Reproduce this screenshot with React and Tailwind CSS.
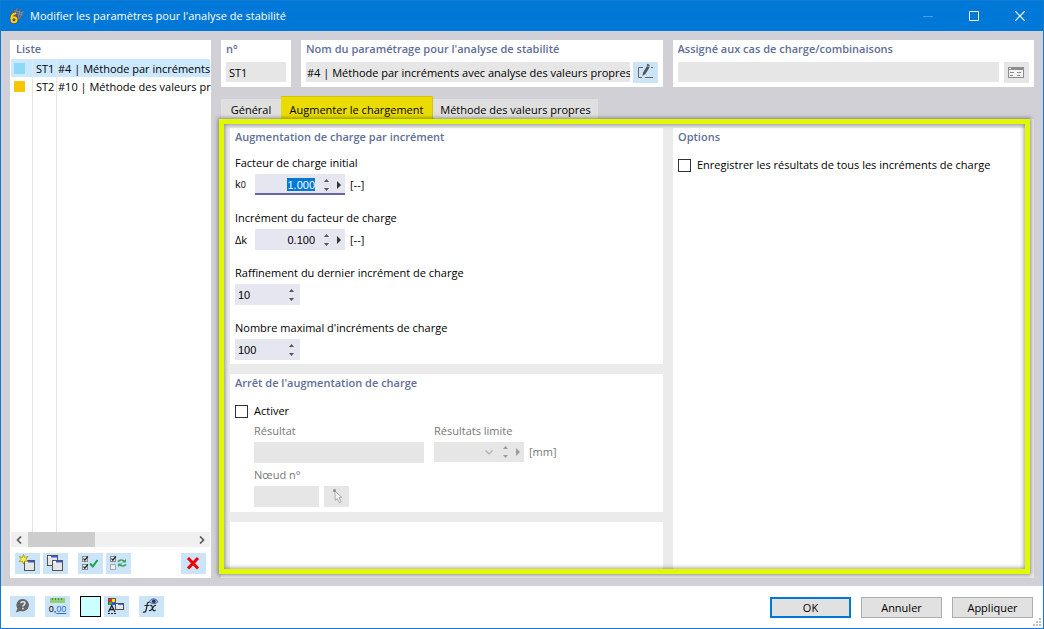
import { useState } from 'react';

const BLUE_BUTTON = 'flex h-[21px] w-[25px] shrink-0 items-center justify-center bg-[#cce4f7]';
const GREY_BUTTON = 'flex h-[21px] w-[25px] shrink-0 items-center justify-center bg-[#e6e6e6]';

const ENTRIES = [
	{ id: 'ST1', name: '#4 | Méthode par incréments', swatch: 'bg-[#8ed8f8]', row: 'bg-[#cce8ff]' },
	{ id: 'ST2', name: '#10 | Méthode des valeurs pr', swatch: 'bg-[#f7c600]', row: '' },
];

function AppLogo() {
	return (
		<svg width="16" height="16" viewBox="0 0 16 16" aria-hidden="true">
			<path d="M3 4 8 .5 15.500 2.500 14 10 10 12.500 6 8z" fill="#4a5f7c" />
			<path d="M4 4 14.500 7M6 2.500l9 2.500M9 .5 7 6M12 1.500 10 11M15 3l-3.500 8" stroke="#8cabc8" strokeWidth=".6" fill="none" />
			<path d="M8 5.200C5 5.500 3.300 8 3.300 11" stroke="#5b4a10" strokeWidth="3.200" fill="none" />
			<circle cx="6" cy="11.800" r="2.300" stroke="#5b4a10" strokeWidth="3.200" fill="none" />
			<path d="M8 5.200C5 5.500 3.300 8 3.300 11" stroke="#ffd02a" strokeWidth="2" fill="none" />
			<circle cx="6" cy="11.800" r="2.500" stroke="#ffd02a" strokeWidth="2" fill="none" />
		</svg>
	);
}

function MiniWindow({ x, y }) {
	return (
		<g transform={`translate(${x} ${y})`}>
			<rect x=".5" y=".5" width="10" height="10" fill="#e6e6e6" stroke="#555" />
			<rect x="1" y="1" width="9" height="2" fill="#f5f7ff" />
			<rect x="4" y="1" width="6" height="1" fill="#2f55f0" />
			<rect x="4" y="2" width="6" height="1" fill="#8ea2fa" />
		</g>
	);
}

function NewIcon() {
	return (
		<svg width="25" height="21" viewBox="0 0 25 21" aria-hidden="true">
			<MiniWindow x={9} y={7} />
			<path d="m8.500 1.500 1 3 3.300-1-2 2.700 2.200 2.300-3.300-.4L8.500 11 7.400 8.100l-3.300.4 2.200-2.300-2-2.700 3.200 1z" fill="#fff04a" stroke="#9a8c00" strokeWidth=".7" />
		</svg>
	);
}

function CopyIcon() {
	return (
		<svg width="25" height="21" viewBox="0 0 25 21" aria-hidden="true">
			<MiniWindow x={4} y={2} />
			<MiniWindow x={9} y={7} />
		</svg>
	);
}

function SmallBox({ y, checked }) {
	return (
		<g transform={`translate(4 ${y})`}>
			<rect x=".5" y=".5" width="5" height="5" fill="#e6f1fb" stroke={checked ? '#8a8a8a' : '#a8a8a8'} />
			{checked ? <path d="m1.500 2.500 1.300 1.700L5.800.5" fill="none" stroke="#222" strokeWidth="1.200" /> : null}
		</g>
	);
}

function CheckAllIcon() {
	return (
		<svg width="25" height="21" viewBox="0 0 25 21" aria-hidden="true">
			<SmallBox y={3} checked />
			<SmallBox y={11} checked />
			<path d="m12 10.500 2.800 3L19.500 7" fill="none" stroke="#10a64a" strokeWidth="2" />
		</svg>
	);
}

function ToggleIcon() {
	return (
		<svg width="25" height="21" viewBox="0 0 25 21" aria-hidden="true">
			<SmallBox y={3} checked />
			<SmallBox y={11} />
			<path d="M12 8.800c1-2 4-2.300 6-.8M20 11.200c-1 2-4 2.300-6 .8" fill="none" stroke="#3fa56c" strokeWidth="1.600" />
			<path d="M20 6v3.500h-4.500zM12 14v-3.500h4.500z" fill="#3fa56c" />
		</svg>
	);
}

function DeleteIcon() {
	return (
		<svg width="25" height="21" viewBox="0 0 25 21" aria-hidden="true">
			<path d="m7 5 10 10.500M17 5 7 15.500" stroke="#f00000" strokeWidth="3" />
		</svg>
	);
}

function EditIcon() {
	return (
		<svg width="25" height="21" viewBox="0 0 25 21" aria-hidden="true">
			<path d="M10 5.500H5.500v10H9M12 15.500h8M18 5.500h2" fill="none" stroke="#666" />
			<path d="m9.500 13.800.6-3.300L14 4l2.500 1.500-4.200 6.700z" fill="#555" />
			<path d="m14 2.500 2.500 1.500" stroke="#555" strokeWidth="1.500" />
		</svg>
	);
}

function CasesIcon() {
	return (
		<svg width="25" height="21" viewBox="0 0 25 21" aria-hidden="true">
			<rect x="4.500" y="5.500" width="15" height="10" fill="#f4f4f4" stroke="#8d8d8d" />
			<path d="M4 6.500h16" stroke="#8d8d8d" strokeWidth="3" />
			<path d="M5 6.500h2" stroke="#fff" />
			<path d="M6 10.500h4M13 10.500h4M6 13.500h3M13 13.500h3" stroke="#8d8d8d" />
		</svg>
	);
}

function PickIcon() {
	return (
		<svg width="25" height="21" viewBox="0 0 25 21" aria-hidden="true">
			<path d="m11 5 .2 9.500 2.100-2 2 4.300 1.700-.8-2-4.300 3-.1z" fill="#f7f7f7" stroke="#9b9b9b" strokeWidth=".8" />
			<circle cx="10.500" cy="4.500" r="1.500" fill="#8a8a8a" />
		</svg>
	);
}

function HelpIcon() {
	return (
		<svg width="25" height="21" viewBox="0 0 25 21" aria-hidden="true">
			<path d="M12.800 3a6.200 6.200 0 1 1-2.300 12L5.800 16.500l1.600-4A6.200 6.200 0 0 1 12.800 3z" fill="#666" />
			<path d="M10.800 7.200c.2-2 4.200-2 4.200.1 0 1.500-2 1.600-2 3.200" fill="none" stroke="#d8eafa" strokeWidth="1.500" />
			<path d="M12.200 11.700h1.600v1.600h-1.600z" fill="#d8eafa" />
		</svg>
	);
}

function DisplayIcon() {
	return (
		<svg width="25" height="21" viewBox="0 0 25 21" aria-hidden="true">
			<rect x="4" y="2" width="8" height="7" fill="#555" />
			<rect x="5" y="3" width="3" height="3" fill="#ff2a1e" />
			<rect x="8" y="3" width="3" height="3" fill="#ffe600" />
			<rect x="5" y="6" width="3" height="3" fill="#2fae3a" />
			<rect x="8" y="6" width="3" height="3" fill="#2857ff" />
			<path d="m4.500 16 3.200-6.500 3.300 6.500M5.500 13.500h4.500" fill="none" stroke="#222" strokeWidth="1.300" />
			<path d="M4 17.500h8" stroke="#222" strokeDasharray="2 1" />
			<rect x="11.500" y="7.500" width="8" height="6" fill="#e6e6e6" stroke="#4d4d4d" />
			<path d="M12 8.500h2" stroke="#fff" />
			<path d="M14 8.500h5" stroke="#4468f5" />
		</svg>
	);
}

function FormulaIcon() {
	return (
		<svg width="25" height="21" viewBox="0 0 25 21" aria-hidden="true">
			<path d="M10.500 6.500C8.500 5.500 8.200 8 7.800 10.500c-.5 4-1 6.500-3.800 5.500M5.500 9.500h5" fill="none" stroke="#222" strokeWidth="1.200" />
			<path d="M11 9.500c2-1 2 1 2.500 3s1 3 3 1.500M17 9.500c-2-.5-3 2-4 3.500s-1.500 2-3 1.500" fill="none" stroke="#222" strokeWidth="1.200" />
			<path d="M10.500 5.500c2-3.500 6-3.500 8.500 0-2.500 3-6.500 3-8.500 0z" fill="#b4c3ea" stroke="#27376e" strokeWidth=".8" />
			<circle cx="14.800" cy="5.300" r="1.900" fill="#27376e" />
		</svg>
	);
}

function Spinner({ muted = false }) {
	return (
		<svg width="7" height="14" viewBox="0 0 7 14" className={muted ? 'shrink-0 text-[#9b9b9b]' : 'shrink-0 text-[#555]'} aria-hidden="true">
			<path d="M3.500 1 6 4H1zM3.500 13 1 10h5z" fill="currentColor" />
		</svg>
	);
}

function RightArrow({ muted = false }) {
	return (
		<svg width="4" height="8" viewBox="0 0 4 8" className={muted ? 'shrink-0 text-[#9b9b9b]' : 'shrink-0 text-[#333]'} aria-hidden="true">
			<path d="M0 0v8l4-4z" fill="currentColor" />
		</svg>
	);
}

function Title({ children }) {
	return <h2 className="truncate font-semibold text-[#5f6f96]">{children}</h2>;
}

function FactorField({ id, label, symbol, value, onChange, selected = false }) {
	return (
		<div>
			<label htmlFor={id} className="block">{label}</label>
			<div className="mt-[3px] flex h-[21px] items-center">
				<span className="w-5">{symbol}</span>
				<div className={`flex h-[21px] w-[90px] items-center justify-end border-b-2 bg-[#e6e6f1] pt-[2px] pr-1 ${selected ? 'border-[#6464b0]' : 'border-[#e6e6f1]'}`}>
					<input
						id={id}
						className={`mr-2 h-[13px] w-[28px] text-right font-['Liberation_Sans',sans-serif] outline-none ${selected ? 'bg-[#0078d7] text-white' : ''}`}
						value={value}
						onChange={(event) => onChange(event.target.value)}
					/>
					<Spinner />
					<span className="w-[7px]" />
					<RightArrow />
				</div>
				<span className="ml-[5px]">[--]</span>
			</div>
		</div>
	);
}

function CountField({ id, label, value, onChange }) {
	return (
		<div>
			<label htmlFor={id} className="block">{label}</label>
			<div className="mt-[3px] flex h-[21px] w-[65px] items-center bg-[#e6e6f1] pr-[5px] pl-[3px]">
				<input
					id={id}
					className="w-0 flex-1 font-['Liberation_Sans',sans-serif] outline-none"
					value={value}
					onChange={(event) => onChange(event.target.value)}
				/>
				<Spinner />
			</div>
		</div>
	);
}

function CheckBox({ label, checked, onChange }) {
	return (
		<label className="flex items-center gap-[6px]">
			<input
				type="checkbox"
				className="size-[13px] shrink-0 appearance-none border border-[#333] bg-white checked:bg-[#333]"
				checked={checked}
				onChange={(event) => onChange(event.target.checked)}
			/>
			{label}
		</label>
	);
}

export default function App() {
	const [values, setValues] = useState({ k0: '1.000', dk: '0.100', refine: '10', max: '100' });
	const [stop, setStop] = useState(false);
	const [saveAll, setSaveAll] = useState(false);
	const update = (key) => (value) => setValues((current) => ({ ...current, [key]: value }));

	return (
		<div className="flex h-screen flex-col border border-[#0f7bd3] bg-[#d1d0d6] font-['Open_Sans','Noto_Sans',sans-serif] text-[11px] leading-4 text-black">
			<header className="flex h-[30px] shrink-0 items-center bg-[#0078d7] pl-[7px] text-white">
				<AppLogo />
				<h1 className="ml-[6px] flex-1 truncate">Modifier les paramètres pour l'analyse de stabilité</h1>
				<button type="button" aria-label="Réduire" className="flex h-full w-[46px] items-center justify-center">
					<svg width="10" height="10" viewBox="0 0 10 10"><path d="M0 5.500h10" stroke="#4a9fe3" /></svg>
				</button>
				<button type="button" aria-label="Agrandir" className="flex h-full w-[46px] items-center justify-center">
					<svg width="10" height="10" viewBox="0 0 10 10"><path d="M.5.5h9v9h-9z" fill="none" stroke="#fff" /></svg>
				</button>
				<button type="button" aria-label="Fermer" className="flex h-full w-[46px] items-center justify-center">
					<svg width="10" height="10" viewBox="0 0 10 10"><path d="m0 0 10 10M10 0 0 10" stroke="#fff" strokeWidth="1.200" /></svg>
				</button>
			</header>

			<div className="flex min-h-0 flex-1 gap-[10px] px-[9px] pt-[9px] pb-2">
				<aside className="flex w-[201px] shrink-0 flex-col bg-white px-px pt-px">
					<div className="px-[5px]"><Title>Liste</Title></div>
					<div className="mt-[2px] flex flex-1 flex-col">
						{ENTRIES.map((entry) => (
							<button key={entry.id} type="button" className={`flex h-[18px] items-center text-left ${entry.row}`}>
								<span className="flex h-full w-[22px] shrink-0 items-center border-r border-[#e5e5e5] pl-[3px]">
									<span className={`size-[11px] ${entry.swatch}`} />
								</span>
								<span className="h-full w-6 shrink-0 border-r border-[#e5e5e5] pt-[2px] pl-[3px]">{entry.id}</span>
								<span className="h-full flex-1 pt-[2px] pl-px whitespace-nowrap">{entry.name}</span>
							</button>
						))}
						<div className="flex flex-1">
							<div className="w-[22px] border-r border-[#e5e5e5]" />
							<div className="w-6 border-r border-[#e5e5e5]" />
						</div>
					</div>
					<div className="flex h-[15px] bg-[#f0f0f0]">
						<button type="button" aria-label="Défiler à gauche" className="flex w-[17px] items-center justify-center">
							<svg width="7" height="8" viewBox="0 0 7 8"><path d="M5 .5 1.500 4 5 7.500" fill="none" stroke="#555" strokeWidth="1.600" /></svg>
						</button>
						<div className="w-[67px] bg-[#cdcdcd]" />
						<button type="button" aria-label="Défiler à droite" className="ml-auto flex w-[17px] items-center justify-center">
							<svg width="7" height="8" viewBox="0 0 7 8"><path d="M2 .5 5.500 4 2 7.500" fill="none" stroke="#555" strokeWidth="1.600" /></svg>
						</button>
					</div>
					<div className="flex px-1 pt-[6px] pb-[4px]">
						<button type="button" aria-label="Nouveau" className={BLUE_BUTTON}><NewIcon /></button>
						<button type="button" aria-label="Copier" className={`ml-[3px] ${BLUE_BUTTON}`}><CopyIcon /></button>
						<button type="button" aria-label="Tout sélectionner" className={`ml-[10px] ${BLUE_BUTTON}`}><CheckAllIcon /></button>
						<button type="button" aria-label="Inverser la sélection" className={`ml-[3px] ${BLUE_BUTTON}`}><ToggleIcon /></button>
						<button type="button" aria-label="Supprimer" className={`ml-auto ${BLUE_BUTTON}`}><DeleteIcon /></button>
					</div>
				</aside>

				<main className="flex min-w-0 flex-1 flex-col">
					<div className="flex h-[47px] shrink-0 gap-[10px]">
						<section className="w-[70px] bg-white px-[5px] pt-px">
							<Title>n°</Title>
							<input aria-label="n°" readOnly value="ST1" className="mt-[5px] block h-5 w-full bg-[#e6e6e6] px-[3px] outline-none" />
						</section>
						<section className="min-w-0 flex-1 bg-white px-[5px] pt-px">
							<Title>Nom du paramétrage pour l'analyse de stabilité</Title>
							<div className="mt-[5px] flex gap-[3px]">
								<input
									aria-label="Nom du paramétrage"
									readOnly
									value="#4 | Méthode par incréments avec analyse des valeurs propres"
									className="h-5 min-w-0 flex-1 bg-[#e6e6e6] pl-px outline-none"
								/>
								<button type="button" aria-label="Modifier le nom" className={BLUE_BUTTON}><EditIcon /></button>
							</div>
						</section>
						<section className="min-w-0 flex-1 bg-white px-[5px] pt-px">
							<Title>Assigné aux cas de charge/combinaisons</Title>
							<div className="mt-[5px] flex gap-[5px]">
								<input aria-label="Cas de charge assignés" readOnly value="" className="h-5 min-w-0 flex-1 bg-[#e6e6e6] outline-none" />
								<button type="button" aria-label="Choisir les cas de charge" className={GREY_BUTTON}><CasesIcon /></button>
							</div>
						</section>
					</div>

					<div role="tablist" className="mt-[9px] flex h-[23px] shrink-0 items-end">
						<button type="button" role="tab" aria-selected="false" className="h-5 w-[60px] bg-[#dfdfdf] pt-[2px]">Général</button>
						<button type="button" role="tab" aria-selected="true" className="h-[23px] w-[152px] border-t border-r border-[#d3c500] bg-[#eadc00] pt-1">
							Augmenter le chargement
						</button>
						<button type="button" role="tab" aria-selected="false" className="h-5 w-[165px] bg-[#dfdfdf] pt-[2px]">Méthode des valeurs propres</button>
					</div>

					<div className="relative grid min-h-0 flex-1 grid-cols-[433fr_352fr] gap-[10px] bg-[#ebebeb] p-[9px]">
						<div className="flex min-w-0 flex-col gap-[10px]">
							<section className="bg-white px-[5px] pt-px pb-1">
								<Title>Augmentation de charge par incrément</Title>
								<div className="mt-[10px] flex flex-col gap-[15px]">
									<FactorField
										id="k0"
										label="Facteur de charge initial"
										symbol={<>k<span className="text-[9px]">0</span></>}
										value={values.k0}
										onChange={update('k0')}
										selected
									/>
									<FactorField id="dk" label="Incrément du facteur de charge" symbol="Δk" value={values.dk} onChange={update('dk')} />
									<CountField id="refine" label="Raffinement du dernier incrément de charge" value={values.refine} onChange={update('refine')} />
									<CountField id="max" label="Nombre maximal d'incréments de charge" value={values.max} onChange={update('max')} />
								</div>
							</section>

							<section className="bg-white px-[5px] pt-px pb-[5px]">
								<Title>Arrêt de l'augmentation de charge</Title>
								<div className="mt-3"><CheckBox label="Activer" checked={stop} onChange={setStop} /></div>
								<div className="mt-1 flex gap-[10px] pl-[19px] text-[#787878]">
									<div className="w-[170px]">
										<label htmlFor="result" className="block">Résultat</label>
										<input id="result" disabled className="mt-[3px] block h-[21px] w-full bg-[#e6e6e6]" />
									</div>
									<div>
										<label htmlFor="limit" className="block">Résultats limite</label>
										<div className="mt-[3px] flex h-5 items-center">
											<div className="flex h-5 w-[90px] items-center bg-[#e6e6e6] pr-1">
												<input id="limit" disabled className="w-0 flex-1" />
												<svg width="8" height="5" viewBox="0 0 8 5" className="mr-[9px] shrink-0" aria-hidden="true">
													<path d="M.5.5 4 4 7.500.5" fill="none" stroke="#b0b0b0" strokeWidth="1.200" />
												</svg>
												<Spinner muted />
												<span className="w-[7px]" />
												<RightArrow muted />
											</div>
											<span className="ml-[5px]">[mm]</span>
										</div>
									</div>
								</div>
								<div className="mt-1 pl-[19px] text-[#787878]">
									<label htmlFor="node" className="block">Nœud n°</label>
									<div className="mt-[3px] flex gap-[5px]">
										<input id="node" disabled className="h-[21px] w-[65px] bg-[#e6e6e6]" />
										<button type="button" disabled aria-label="Choisir un nœud" className={GREY_BUTTON}><PickIcon /></button>
									</div>
								</div>
							</section>

							<section className="flex-1 bg-white" />
						</div>

						<section className="min-w-0 bg-white px-[5px] pt-px">
							<Title>Options</Title>
							<div className="mt-3">
								<CheckBox label="Enregistrer les résultats de tous les incréments de charge" checked={saveAll} onChange={setSaveAll} />
							</div>
						</section>

						<div className="pointer-events-none absolute top-0 right-1 bottom-1 -left-[2px] border-[5px] border-[#e2f800] shadow-[0_0_4px_1px_rgba(0,0,0,0.4),inset_0_0_4px_1px_rgba(0,0,0,0.4)]" />
					</div>
				</main>
			</div>

			<footer className="relative flex h-[42px] shrink-0 items-start bg-white pt-[10px] pr-[10px] pl-[9px]">
				<button type="button" aria-label="Aide" className={BLUE_BUTTON}><HelpIcon /></button>
				<button type="button" aria-label="Unités et décimales" className={`ml-[10px] flex-col ${BLUE_BUTTON}`}>
					<svg width="15" height="5" viewBox="0 0 15 5"><path d="M0 0h15v5H0z" fill="#8fce7a" /><path d="M2.500 0v2M5.500 0v2M8.500 0v2M11.500 0v2" stroke="#4e8a3c" /></svg>
					<span className="font-['Liberation_Sans',sans-serif] text-[9px] leading-[12px]">0,<span className="text-[#2f6fd0] underline">00</span></span>
				</button>
				<button type="button" aria-label="Couleur" className="ml-[10px] size-[21px] border border-black bg-[#ccffff]" />
				<button type="button" aria-label="Affichage" className={`ml-[3px] ${BLUE_BUTTON}`}><DisplayIcon /></button>
				<button type="button" aria-label="Formule" className={`ml-[10px] ${BLUE_BUTTON}`}><FormulaIcon /></button>
				<div className="mt-px ml-auto flex gap-[10px]">
					<button type="button" className="h-[21px] w-[81px] border-2 border-[#0078d7] bg-[#e1e1e1]">OK</button>
					<button type="button" className="h-[21px] w-[81px] border border-[#adadad] bg-[#e1e1e1]">Annuler</button>
					<button type="button" className="h-[21px] w-[81px] border border-[#adadad] bg-[#e1e1e1]">Appliquer</button>
				</div>
				<svg width="8" height="8" viewBox="0 0 8 8" className="absolute right-[2px] bottom-[2px]" aria-hidden="true">
					<path d="M6 0h2v2H6zM3 3h2v2H3zM6 3h2v2H6zM0 6h2v2H0zM3 6h2v2H3zM6 6h2v2H6z" fill="#bfbfbf" />
				</svg>
			</footer>
		</div>
	);
}
